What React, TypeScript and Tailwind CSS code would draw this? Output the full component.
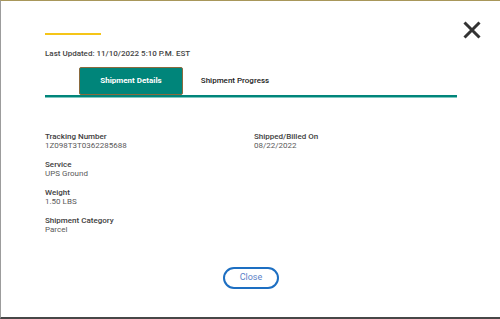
import React from "react";

function Field({ label, value }: { label: string; value: string }) {
  return (
    <div className="flex flex-col">
      <div className="text-[8px] leading-[9px] font-medium text-[#3d3d3d]">{label}</div>
      <div className="text-[8px] leading-[9px] text-[#5a5a5a]">{value}</div>
    </div>
  );
}

export default function App() {
  return (
    <div
      className="w-[500px] h-[319px] bg-white border-t border-t-[#a8975a] border-l border-l-[#9c9c9c] border-b-2 border-b-[#474747] box-border relative overflow-hidden"
      style={{ fontFamily: "Roboto, 'Liberation Sans', sans-serif" }}
    >
      <button className="absolute left-[461px] top-[19px] w-[20px] h-[20px] flex items-center justify-center">
        <svg width="20" height="20" viewBox="0 0 20 20">
          <path d="M2.5 2.5 L17.5 17.5 M17.5 2.5 L2.5 17.5" stroke="#333" strokeWidth="3" />
        </svg>
      </button>
      <div className="pl-[44px] pr-[43px] pt-[32px] flex flex-col">
        <div className="w-[56px] h-[2px] bg-[#f5c518]" />
        <div className="mt-[14px] text-[8px] leading-[10px] text-[#444] font-medium">
          Last Updated: 11/10/2022 5:10 P.M. EST
        </div>
        <div className="mt-[8px] flex items-end border-b-2 border-b-[#00857a]">
          <div className="ml-[34px] w-[104px] h-[28px] bg-[#00857a] border border-[#8a6a3e] rounded-[2px] flex items-center justify-center text-white text-[8px] font-bold">
            Shipment Details
          </div>
          <div className="w-[104px] h-[28px] flex items-center justify-center text-[#222] text-[8px] font-medium">
            Shipment Progress
          </div>
        </div>
        <div className="h-[1px] bg-[#80c8c0]" />
        <div className="mt-[34px] grid grid-cols-2">
          <div className="flex flex-col gap-[10px]">
            <Field label="Tracking Number" value="1Z098T3T0362285688" />
            <Field label="Service" value="UPS Ground" />
            <Field label="Weight" value="1.50 LBS" />
            <Field label="Shipment Category" value="Parcel" />
          </div>
          <div className="flex flex-col pl-[3px]">
            <Field label="Shipped/Billed On" value="08/22/2022" />
          </div>
        </div>
        <div className="mt-[33px] flex justify-center">
          <button className="w-[56px] h-[22px] rounded-full border-2 border-[#1d6fc2] text-[#5b7fc8] text-[9px] flex items-center justify-center">
            Close
          </button>
        </div>
      </div>
    </div>
  );
}
